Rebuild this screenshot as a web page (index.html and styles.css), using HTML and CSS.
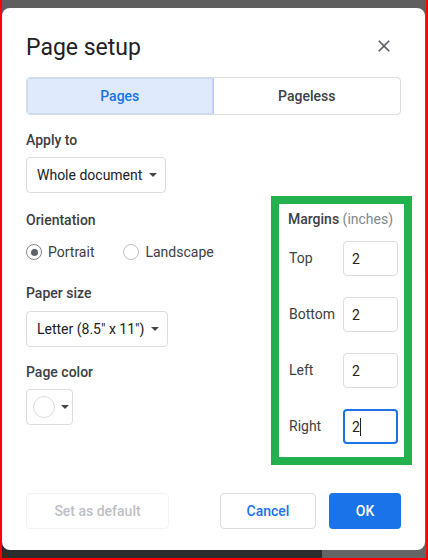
FILE: index.html
```html
<!DOCTYPE html>
<html lang="en">
<head>
<meta charset="utf-8">
<title>Page setup</title>
<link rel="stylesheet" href="styles.css">
</head>
<body>
<div class="frame">
  <div class="dialog">
    <div class="header">
      <h1 class="title">Page setup</h1>
      <button class="close" aria-label="Close">
        <svg viewBox="0 0 24 24" width="20" height="20"><path d="M19 6.41L17.59 5 12 10.59 6.41 5 5 6.41 10.59 12 5 17.59 6.41 19 12 13.41 17.59 19 19 17.59 13.41 12z" fill="#5f6368"/></svg>
      </button>
    </div>
    <div class="tabs">
      <div class="tab tab-active">Pages</div>
      <div class="tab">Pageless</div>
    </div>
    <div class="body">
      <div class="left">
        <div class="label label-apply">Apply to</div>
        <div class="select">Whole document<span class="arrow"></span></div>

        <div class="label label-orient">Orientation</div>
        <div class="radios">
          <label class="radio"><span class="dot dot-on"></span>Portrait</label>
          <label class="radio"><span class="dot"></span>Landscape</label>
        </div>

        <div class="label label-paper">Paper size</div>
        <div class="select">Letter (8.5" x 11")<span class="arrow"></span></div>

        <div class="label label-color">Page color</div>
        <div class="color-btn"><span class="swatch"></span><span class="arrow"></span></div>
      </div>

      <div class="margins">
        <div class="margins-title"><span class="mt-strong">Margins</span> <span class="mt-unit">(inches)</span></div>
        <div class="mrow"><span class="mlabel">Top</span><div class="field">2</div></div>
        <div class="mrow"><span class="mlabel">Bottom</span><div class="field">2</div></div>
        <div class="mrow"><span class="mlabel">Left</span><div class="field">2</div></div>
        <div class="mrow"><span class="mlabel">Right</span><div class="field field-focus">2<span class="cursor"></span></div></div>
      </div>
    </div>
    <div class="footer">
      <button class="btn btn-disabled">Set as default</button>
      <div class="spacer"></div>
      <button class="btn btn-cancel">Cancel</button>
      <button class="btn btn-ok">OK</button>
    </div>
  </div>
</div>
</body>
</html>
```

FILE: styles.css
```css
* { box-sizing: border-box; }

html, body {
  margin: 0;
  padding: 0;
}

body {
  font-family: Roboto, "Liberation Sans", Arial, sans-serif;
  font-size: 14px;
  color: #3c4043;
}

.frame {
  width: 428px;
  height: 560px;
  border-left: 2px solid #ff0000;
  border-right: 2px solid #ff0000;
  border-bottom: 2px solid #ff0000;
  padding-top: 8px;
  background:
    linear-gradient(to bottom, #5f5f5f 0 50%, transparent 50%),
    linear-gradient(to right, #2d2d2d 320px, #656565 320px);
}

.dialog {
  width: 423px;
  height: 542px;
  background: #ffffff;
  border-radius: 8px;
  padding: 24px 24px 21px 24px;
  display: flex;
  flex-direction: column;
}

.header {
  display: flex;
  justify-content: space-between;
  align-items: flex-start;
}

.title {
  margin: 0;
  font-family: Roboto, "Open Sans", sans-serif;
  font-size: 23px;
  font-weight: 400;
  line-height: 32px;
  color: #202124;
}

.close {
  width: 20px;
  height: 20px;
  padding: 0;
  margin: 4px 7px 0 0;
  border: none;
  background: none;
  display: flex;
}

.tabs {
  margin-top: 13px;
  display: grid;
  grid-template-columns: 1fr 1fr;
  height: 38px;
  border: 1px solid #dadce0;
  border-radius: 4px;
  overflow: hidden;
}

.tab {
  display: flex;
  align-items: center;
  justify-content: center;
  font-weight: 500;
  font-size: 14px;
  color: #3c4043;
}

.tab-active {
  background: #dfebfd;
  color: #1a73e8;
  border-right: 1px solid #aecbfa;
  box-shadow: inset 0 0 0 1px #c6dafc;
}

.body {
  display: flex;
  justify-content: space-between;
  align-items: flex-start;
}

.left {
  display: flex;
  flex-direction: column;
  align-items: flex-start;
}

.label {
  font-weight: 500;
  line-height: 20px;
  color: #3c4043;
}

.label-apply { margin-top: 15px; margin-bottom: 7px; }
.label-orient { margin-top: 17px; }
.label-paper { margin-top: 21px; margin-bottom: 8px; }
.label-color { margin-top: 15px; margin-bottom: 7px; }

.select {
  height: 36px;
  display: flex;
  align-items: center;
  padding: 0 8px 0 10px;
  border: 1px solid #dadce0;
  border-radius: 4px;
  color: #202124;
  gap: 7px;
  white-space: nowrap;
}

.arrow {
  width: 0;
  height: 0;
  border-left: 4px solid transparent;
  border-right: 4px solid transparent;
  border-top: 4px solid #444746;
}

.radios {
  margin-top: 12px;
  display: flex;
  gap: 29px;
  height: 20px;
  align-items: center;
}

.radio {
  display: flex;
  align-items: center;
  gap: 6px;
  color: #3c4043;
}

.dot {
  width: 16px;
  height: 16px;
  border-radius: 50%;
  border: 1px solid #bdc1c6;
  display: flex;
  align-items: center;
  justify-content: center;
}

.dot-on {
  border-color: #80868b;
}

.dot-on::after {
  content: "";
  width: 7px;
  height: 7px;
  border-radius: 50%;
  background: #5f6368;
}

.color-btn {
  width: 47px;
  height: 36px;
  border: 1px solid #dadce0;
  border-radius: 4px;
  display: flex;
  align-items: center;
  padding-left: 6px;
  gap: 6px;
}

.swatch {
  width: 22px;
  height: 22px;
  border-radius: 50%;
  border: 1px solid #dadce0;
  background: #ffffff;
}

.margins {
  margin-top: 81px;
  margin-right: -11px;
  border: 8px solid #22b14c;
  padding: 5px 6px 13px 9px;
  width: 141px;
}

.margins-title {
  line-height: 20px;
  white-space: nowrap;
}

.mt-strong {
  font-weight: 500;
  color: #3c4043;
}

.mt-unit {
  color: #80868b;
}

.mrow {
  display: flex;
  align-items: center;
  margin-top: 21px;
}

.margins-title + .mrow {
  margin-top: 12px;
}

.mlabel {
  width: 55px;
  color: #3c4043;
  padding-left: 1px;
  line-height: 20px;
  margin-top: -2px;
}

.field {
  width: 55px;
  height: 35px;
  border: 1px solid #dadce0;
  border-radius: 4px;
  display: flex;
  align-items: center;
  padding-left: 8px;
  color: #202124;
}

.field-focus {
  border: 2px solid #1a73e8;
  padding-left: 7px;
}

.cursor {
  display: inline-block;
  width: 1px;
  height: 18px;
  background: #202124;
}

.footer {
  margin-top: auto;
  display: flex;
  align-items: center;
  gap: 13px;
}

.spacer {
  flex: 1;
}

.btn {
  height: 36px;
  border-radius: 4px;
  font-family: Roboto, "Liberation Sans", sans-serif;
  font-size: 14px;
  font-weight: 500;
  background: #ffffff;
  padding: 0;
}

.btn-disabled {
  width: 143px;
  border: 1px solid #f1f3f4;
  color: #bdc1c6;
}

.btn-cancel {
  width: 96px;
  border: 1px solid #dadce0;
  color: #1a73e8;
}

.btn-ok {
  width: 72px;
  border: none;
  background: #1a73e8;
  color: #ffffff;
}
```
